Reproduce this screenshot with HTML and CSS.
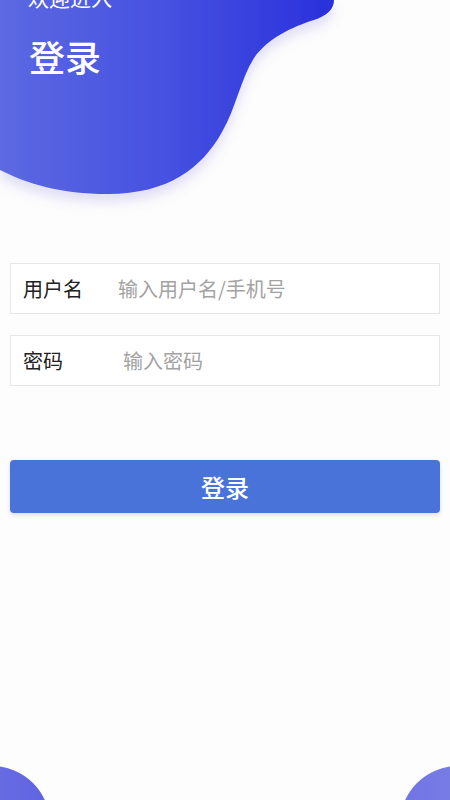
FILE: index.html
```html
<!DOCTYPE html>
<html lang="zh">
<head>
<meta charset="utf-8">
<title>登录</title>
<link rel="stylesheet" href="styles.css">
</head>
<body>
<div class="page">
  <header class="header">
    <svg class="blob" width="360" height="230" viewBox="0 0 360 230" aria-hidden="true">
      <defs>
        <linearGradient id="bg" x1="0" y1="0" x2="1" y2="0">
          <stop offset="0" stop-color="#5c69e2"/>
          <stop offset="0.5" stop-color="#4551e0"/>
          <stop offset="1" stop-color="#2a30db"/>
        </linearGradient>
        <filter id="sh" x="-10%" y="-10%" width="130%" height="140%">
          <feDropShadow dx="0" dy="8" stdDeviation="6" flood-color="#7d70d8" flood-opacity="0.22"/>
        </filter>
      </defs>
      <path filter="url(#sh)" fill="url(#bg)" d="M0,0 L334,0 C334,10 326,16 314,20 C292,27 268,38 254,58 C241,78 236,108 222,132 C202,168 168,194 108,194 C60,194 28,184 0,170 Z"/>
    </svg>
    <div class="header-text">
      <div class="welcome">欢迎进入</div>
      <h1 class="title">登录</h1>
    </div>
  </header>

  <form class="form">
    <label class="field">
      <span class="label label-user">用户名</span>
      <input class="input" type="text" placeholder="输入用户名/手机号">
    </label>
    <label class="field">
      <span class="label label-pass">密码</span>
      <input class="input" type="password" placeholder="输入密码">
    </label>
    <button class="btn" type="button">登录</button>
  </form>

  <div class="circle circle-left"></div>
  <div class="circle circle-right"></div>
</div>
</body>
</html>
```

FILE: styles.css
```css
* { box-sizing: border-box; }
html, body {
  margin: 0;
  padding: 0;
  background: #fdfdfd;
  font-family: "Noto Sans CJK SC", "Noto Sans", sans-serif;
}
.page {
  position: relative;
  width: 450px;
  height: 800px;
  overflow: hidden;
}
.header {
  position: relative;
  display: flow-root;
  height: 263px;
}
.blob {
  position: absolute;
  top: 0;
  left: 0;
}
.header-text {
  position: relative;
  padding-left: 28px;
  color: #fff;
}
.welcome {
  font-size: 21px;
  line-height: 21px;
  margin-top: -13px;
}
.title {
  margin: 30px 0 0 1px;
  font-size: 36px;
  line-height: 36px;
  font-weight: 500;
}
.form {
  display: flex;
  flex-direction: column;
  padding: 0 10px;
  margin: 0;
}
.field {
  display: flex;
  align-items: center;
  height: 51px;
  border: 1px solid #e6e6e8;
  background: #fff;
  margin-bottom: 21px;
}
.label {
  flex: none;
  padding-left: 12px;
  font-size: 20px;
  color: #222;
}
.label-user { width: 107px; }
.label-pass { width: 112px; }
.input {
  flex: 1;
  min-width: 0;
  border: none;
  outline: none;
  background: transparent;
  font-family: inherit;
  font-size: 20px;
  color: #333;
  padding: 0;
}
.input::placeholder { color: #a3a3a3; }
.btn {
  margin-top: 53px;
  height: 53px;
  border: none;
  border-radius: 4px;
  background: #4a73da;
  color: #fff;
  font-family: inherit;
  font-size: 24px;
  font-weight: 500;
  box-shadow: 0 2px 4px rgba(60, 80, 160, 0.18);
}
.circle {
  position: absolute;
  width: 116px;
  height: 116px;
  border-radius: 50%;
}
.circle-left {
  left: -66px;
  top: 766px;
  background: linear-gradient(90deg, #7176e4, #5f63e0);
}
.circle-right {
  left: 400px;
  top: 766px;
  background: linear-gradient(90deg, #6f74e4, #8186e6);
}
```
